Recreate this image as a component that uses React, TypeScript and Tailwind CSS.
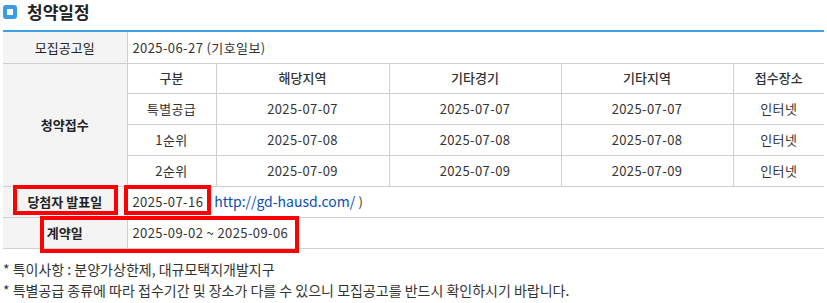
import React from 'react';

const rows = [
  { type: '특별공급', dates: ['2025-07-07', '2025-07-07', '2025-07-07'] },
  { type: '1순위', dates: ['2025-07-08', '2025-07-08', '2025-07-08'] },
  { type: '2순위', dates: ['2025-07-09', '2025-07-09', '2025-07-09'] },
];

const th = 'bg-[#f4f4f4] border-b border-r border-[#cfcfcf] text-center font-medium text-[#222]';
const td = 'border-b border-[#cfcfcf] text-left pl-[5px] text-[#333] tracking-[0.4px]';
const sub = 'border-b border-r border-[#cfcfcf] text-center text-[#333] tracking-[0.4px]';

const App = () => {
  return (
    <div
      className="relative w-[827px] h-[303px] bg-white overflow-hidden"
      style={{ fontFamily: '"Noto Sans CJK KR", "Noto Sans", sans-serif' }}
    >
      {/* Title */}
      <div className="flex items-center h-[22px] pl-[3px] pt-[1px]">
        <span className="w-[14px] h-[14px] rounded-[3px] bg-[#3a9be6] flex items-center justify-center">
          <span className="w-[6px] h-[6px] bg-white" />
        </span>
        <h3 className="ml-[10px] text-[17px] font-bold text-[#222] leading-none">청약일정</h3>
      </div>

      {/* Table */}
      <div className="mt-[8px] mx-[3px] border-t-2 border-[#3da0e8]">
        <table className="w-[821px] table-fixed border-collapse text-[13px]">
          <colgroup>
            <col className="w-[124px]" />
            <col className="w-[89px]" />
            <col className="w-[173px]" />
            <col className="w-[172px]" />
            <col className="w-[172px]" />
            <col className="w-[91px]" />
          </colgroup>
          <tbody>
            <tr className="h-[31px]">
              <th className={`${th} font-normal`}>모집공고일</th>
              <td className={td} colSpan={5}>
                2025-06-27 (기호일보)
              </td>
            </tr>
            <tr className="h-[30px]">
              <th className={`${th} font-semibold`} rowSpan={4}>
                청약접수
              </th>
              <td className={`${sub} font-medium tracking-normal`}>구분</td>
              <td className={`${sub} font-medium tracking-normal`}>해당지역</td>
              <td className={`${sub} font-medium tracking-normal`}>기타경기</td>
              <td className={`${sub} font-medium tracking-normal`}>기타지역</td>
              <td className={`${sub} font-medium tracking-normal border-r-0`}>접수장소</td>
            </tr>
            {rows.map((r) => (
              <tr key={r.type} className="h-[31px]">
                <td className={sub}>{r.type}</td>
                {r.dates.map((d, i) => (
                  <td key={i} className={sub}>
                    {d}
                  </td>
                ))}
                <td className={`${sub} border-r-0`}>인터넷</td>
              </tr>
            ))}
            <tr className="h-[31px]">
              <th className={`${th} font-semibold`}>당첨자 발표일</th>
              <td className={td} colSpan={5}>
                2025-07-16
                <a className="ml-[11px] text-[14px] tracking-normal text-[#0b4fb3]" href="#">
                  http://gd-hausd.com/
                </a>{' '}
                )
              </td>
            </tr>
            <tr className="h-[31px]">
              <th className={`${th} font-semibold`}>계약일</th>
              <td className={td} colSpan={5}>
                2025-09-02 ~ 2025-09-06
              </td>
            </tr>
          </tbody>
        </table>
      </div>

      {/* Notes */}
      <div className="mt-[10px] pl-[3px] text-[14px] leading-[21px] text-[#333]">
        <p>* 특이사항 : 분양가상한제, 대규모택지개발지구</p>
        <p>* 특별공급 종류에 따라 접수기간 및 장소가 다를 수 있으니 모집공고를 반드시 확인하시기 바랍니다.</p>
      </div>

      {/* Red annotation boxes */}
      <div className="absolute left-[13px] top-[185px] w-[105px] h-[30px] border-4 border-[#ff0000]" />
      <div className="absolute left-[124px] top-[185px] w-[87px] h-[30px] border-4 border-[#ff0000]" />
      <div className="absolute left-[40px] top-[216px] w-[259px] h-[37px] border-4 border-[#ff0000]" />
    </div>
  );
};

export default App;
